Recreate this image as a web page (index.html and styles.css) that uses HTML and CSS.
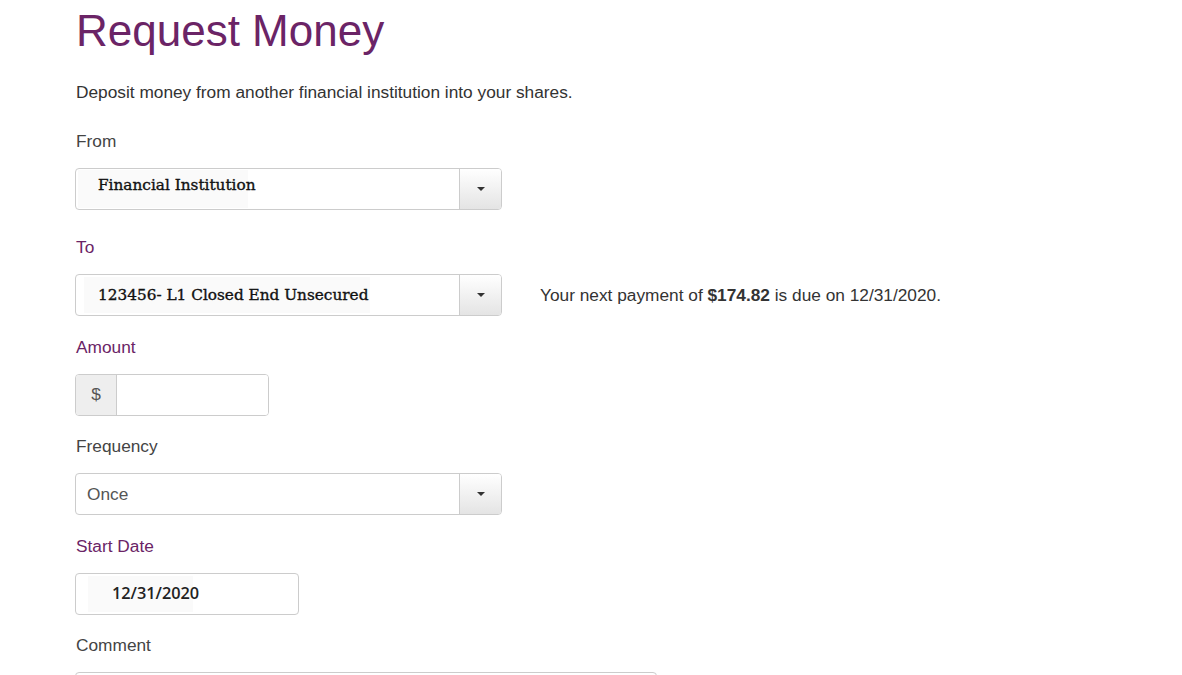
FILE: index.html
```html
<!DOCTYPE html>
<html lang="en">
<head>
    <meta charset="UTF-8">
    <meta name="viewport" content="width=device-width, initial-scale=1.0">
    <title>Request Money</title>
    <link rel="stylesheet" href="styles.css">
</head>
<body>
    <div class="page">
        <h1>Request Money</h1>
        <p class="intro">Deposit money from another financial institution into your shares.</p>

        <div class="form-group first">
            <label class="plain">From</label>
            <div class="select-box">
                <div class="select-value"><span class="masked serif raised">Financial Institution</span></div>
                <div class="select-btn"><span class="caret"></span></div>
            </div>
        </div>

        <div class="form-group second">
            <label>To</label>
            <div class="row">
                <div class="select-box">
                    <div class="select-value"><span class="masked serif wide">123456- L1 Closed End Unsecured</span></div>
                    <div class="select-btn"><span class="caret"></span></div>
                </div>
                <p class="note">Your next payment of <b>$174.82</b> is due on 12/31/2020.</p>
            </div>
        </div>

        <div class="form-group">
            <label>Amount</label>
            <div class="input-group">
                <span class="addon">$</span>
                <input type="text" class="amount">
            </div>
        </div>

        <div class="form-group">
            <label class="plain">Frequency</label>
            <div class="select-box">
                <div class="select-value plain-value">Once</div>
                <div class="select-btn"><span class="caret"></span></div>
            </div>
        </div>

        <div class="form-group">
            <label>Start Date</label>
            <div class="date-box"><span class="masked date">12/31/2020</span></div>
        </div>

        <div class="form-group">
            <label class="plain">Comment</label>
            <textarea class="comment"></textarea>
        </div>
    </div>
</body>
</html>
```

FILE: styles.css
```css
body {
    margin: 0;
    font-family: "Liberation Sans", Arial, sans-serif;
    font-size: 17.3px;
    color: #333;
    background: #fff;
}
.page {
    padding-left: 75px;
}
h1 {
    margin: 7px 0 0 1px;
    font-size: 44px;
    font-weight: normal;
    line-height: 48px;
    color: #6b2466;
}
.intro {
    margin: 27px 0 0 1px;
    line-height: 20px;
}
.form-group {
    margin-top: 20.6px;
}
.form-group.first {
    margin-top: 29px;
}
.form-group.second {
    margin-top: 27px;
}
label {
    display: block;
    margin: 0 0 17px 1px;
    line-height: 20px;
    color: #6b2466;
}
label.plain {
    color: #444;
}
.row {
    display: flex;
    align-items: center;
    gap: 38px;
}
.note {
    margin: 0;
    line-height: 20px;
}
.select-box {
    display: flex;
    width: 427px;
    height: 42px;
    box-sizing: border-box;
    border: 1px solid #ccc;
    border-radius: 4px;
    overflow: hidden;
}
.select-value {
    flex: 1;
    display: flex;
    align-items: center;
    padding-left: 2px;
}
.plain-value {
    padding-left: 11px;
    color: #555;
}
.select-btn {
    width: 41px;
    display: flex;
    align-items: center;
    justify-content: center;
    border-left: 1px solid #ccc;
    background: linear-gradient(#fff, #e4e4e4);
}
.caret {
    width: 0;
    height: 0;
    border-left: 4px solid transparent;
    border-right: 4px solid transparent;
    border-top: 4px solid #333;
}
.masked {
    display: flex;
    align-items: center;
    height: 36px;
    background: #fafafa;
}
.serif {
    width: 150px;
    padding-left: 20px;
    font-family: "DejaVu Serif", "Liberation Serif", serif;
    font-size: 15.3px;
    -webkit-text-stroke: 0.35px #111;
    color: #111;
    white-space: nowrap;
}
.serif.raised {
    padding-bottom: 8px;
    height: 30px;
}
.serif.wide {
    width: 272px;
    padding-left: 14px;
    margin-left: 6px;
}
.input-group {
    display: flex;
    width: 194px;
    height: 42px;
    box-sizing: border-box;
    border: 1px solid #ccc;
    border-radius: 4px;
    overflow: hidden;
}
.addon {
    width: 40px;
    display: flex;
    align-items: center;
    justify-content: center;
    background: #eee;
    border-right: 1px solid #ccc;
    color: #555;
}
.amount {
    flex: 1;
    min-width: 0;
    border: none;
    outline: none;
    padding: 0 10px;
    font-size: 16px;
}
.date-box {
    display: flex;
    align-items: center;
    width: 224px;
    height: 42px;
    box-sizing: border-box;
    border: 1px solid #ccc;
    border-radius: 4px;
    padding-left: 12px;
}
.date {
    width: 81px;
    height: 35px;
    padding: 0 0 1px 24px;
    font-family: "Open Sans", sans-serif;
    font-weight: 600;
    font-size: 16.3px;
    color: #222;
}
.comment {
    display: block;
    width: 582px;
    height: 80px;
    box-sizing: border-box;
    border: 1px solid #ccc;
    border-radius: 4px;
    resize: none;
}
```
